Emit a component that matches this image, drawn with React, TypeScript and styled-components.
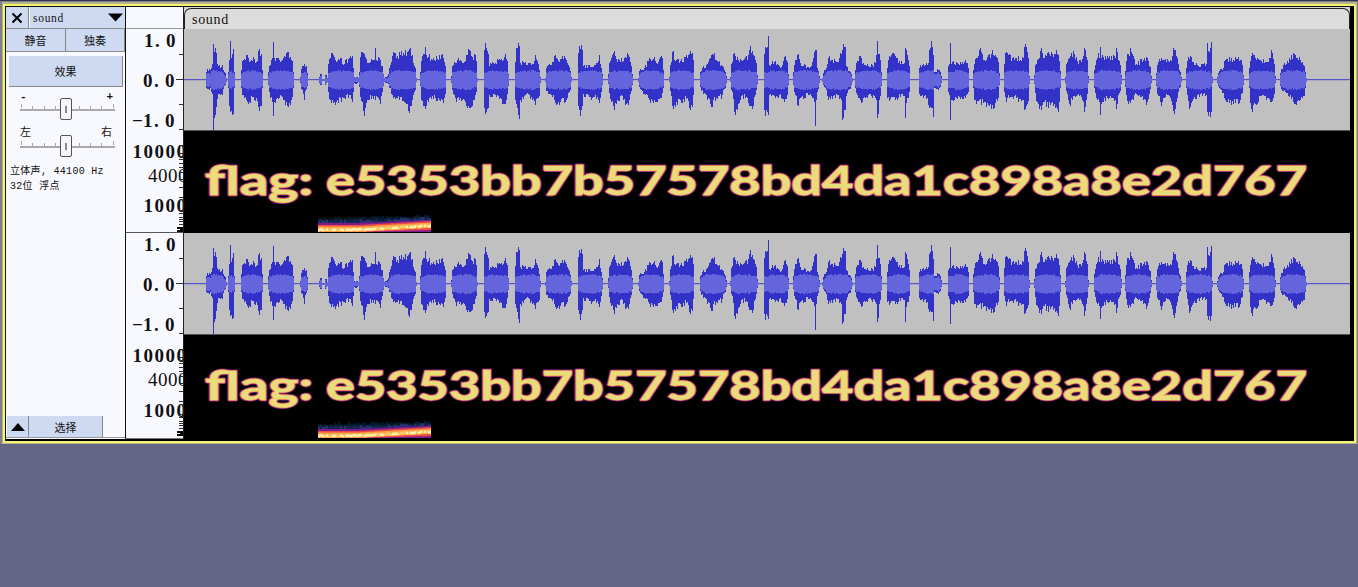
import React from 'react';
import styled, { createGlobalStyle } from 'styled-components';

const GlobalStyle = createGlobalStyle`
  * { box-sizing: border-box; }
  body { margin: 0; background: #636684; overflow: hidden; }
`;

const cjk = `"Liberation Mono", "Noto Sans CJK SC", monospace`;

const Page = styled.div`
  width: 1358px;
  height: 587px;
  background: #636684;
  border-top: 1px solid #33334f;
`;

const Frame = styled.div`
  height: 443px;
  padding: 1px 1px 0 2px;
  background: #7f7f8c;
`;

const Focus = styled.div`
  height: 442px;
  border: 1px solid #b5b38e;
  border-width: 2px 1px 1px 1px;
  background: #f6f370;
  padding: 2px 2px 2px 2px;
`;

const Track = styled.div`
  height: 435px;
  display: flex;
  background: #000;
  border: 1px solid #111;
  border-width: 1px 0 0 1px;
  overflow: hidden;
`;

const Panel = styled.div`
  width: 120px;
  height: 432px;
  flex: none;
  display: flex;
  flex-direction: column;
  background: #f8f9ff;
  border-right: 1px solid #111;
  font-family: ${cjk};
`;

const Row = styled.div<{ h: number }>`
  display: flex;
  height: ${(p) => p.h}px;
  border-bottom: 1px solid #8c8c8c;
`;

const Button = styled.button<{ w: number }>`
  width: ${(p) => p.w}px;
  height: 100%;
  padding: 0;
  border: 0;
  border-right: 1px solid #888;
  background: #cddaf1;
  display: flex;
  align-items: center;
  justify-content: center;
  color: #111;
  font: 11px ${cjk};
`;

const Title = styled.div`
  flex: 1;
  margin-left: 1px;
  padding: 0 2px 0 3px;
  background: #cddaf1;
  display: flex;
  align-items: center;
  justify-content: space-between;
  font-family: "Liberation Serif", serif;
  font-size: 11.5px;
  letter-spacing: 0.7px;
  color: #111;
`;

const Effects = styled(Button)`
  height: 31px;
  margin: 4px 0 0 3px;
  border-bottom: 1px solid #888;
  flex: none;
`;

const SliderBox = styled.div<{ top: number }>`
  width: 96px;
  height: 31px;
  margin: ${(p) => p.top}px 0 0 14px;
  flex: none;
`;

const SliderLabels = styled.div<{ inset: number; strong?: boolean }>`
  display: flex;
  justify-content: space-between;
  height: 9px;
  padding-right: ${(p) => p.inset}px;
  line-height: ${(p) => (p.strong ? 11 : 9)}px;
  font-size: 11px;
  font-weight: ${(p) => (p.strong ? 700 : 400)};
  color: #111;
`;

const Info = styled.div`
  margin: 4px 0 0 4px;
  font-size: 10px;
  letter-spacing: 0.3px;
  line-height: 15px;
  white-space: pre;
  color: #111;
`;

const Footer = styled.div`
  display: flex;
  height: 22px;
  margin: auto 0 1px;
  padding-left: 1px;
  border-bottom: 1px solid #999;
`;

const Rulers = styled.div`
  width: 58px;
  height: 432px;
  flex: none;
  background: #f8f9ff;
  border-right: 1px solid #222;
`;

const Clip = styled.div`
  width: 1166px;
  flex: none;
`;

const ClipTop = styled.div`
  height: 22px;
  padding-top: 1px;
  background: #d2d4da;
`;

const ClipHeader = styled.div`
  height: 21px;
  border: 1px solid #222;
  border-bottom: 0;
  border-radius: 7px 7px 0 0;
  background: #dcdcdc;
  padding: 2px 0 0 7px;
  font: 14px/18px "Liberation Serif", serif;
  letter-spacing: 0.7px;
  color: #111;
`;

const Channel = styled.div`
  height: 204px;
`;

const Svg = styled.svg`
  display: block;
`;

const SliderSvg = styled(Svg)`
  overflow: visible;
`;

type Point = [number, number, number];

// Envelope of each burst: x, amplitude above, amplitude below the centre line.
const bursts: Point[][] = [
  [[206,8,8],[210,10,8],[212,16,14],[213,36,50],[214,28,38],[216,27,27],[218,14,14],[220,12,15],[222,15,15],[224,8,6],[226,2,2]],
  [[228,8,8],[229,20,26],[230,39,32],[231,22,31],[233,31,34],[234,8,8]],
  [[241,10,8],[243,20,15],[246,25,20],[249,18,22],[252,19,17],[256,18,18],[258,29,27],[261,26,26],[262,10,8]],
  [[268,8,5],[270,15,18],[272,22,22],[273,38,36],[274,22,22],[280,18,15],[284,24,20],[288,28,27],[291,20,20],[293,8,8]],
  [[300,3,3],[302,14,10],[304,16,20],[306,14,9],[307,7,6]],
  [[319,3,3],[321,6,5],[322,1,1],[324,1,1],[325,5,5],[326,5,3],[327,2,2]],
  [[328,16,12],[333,25,23],[337,19,20],[340,22,18],[344,16,18],[349,22,15],[352,24,22],[353,12,12],[354,3,3]],
  [[355,2,4],[357,3,3],[358,2,2]],
  [[359,8,7],[362,28,22],[364,26,36],[367,17,20],[372,20,16],[374,20,16],[375,32,20],[376,20,16],[380,20,24],[382,14,12],[383,6,6]],
  [[384,2,2],[387,4,3],[389,12,8],[392,24,15],[396,22,18],[400,25,17],[404,25,22],[409,31,33],[412,25,20],[414,14,12],[416,2,2]],
  [[420,8,6],[423,26,26],[425,33,29],[427,22,20],[432,20,16],[438,20,18],[442,26,20],[444,18,18],[445,14,14]],
  [[451,4,3],[452,14,10],[455,17,18],[460,20,18],[464,18,20],[468,31,26],[470,29,28],[473,20,20],[475,25,15],[477,2,2]],
  [[484,30,28],[486,32,32],[488,26,28],[489,14,15],[494,16,14],[500,20,18],[504,23,24],[506,21,20],[508,6,6]],
  [[515,18,20],[517,32,28],[518,37,35],[519,34,39],[520,17,20],[526,15,14],[532,16,20],[535,25,25],[538,16,18],[540,3,3]],
  [[545,2,2],[546,12,11],[550,15,14],[553,18,15],[554,24,20],[558,19,22],[562,24,18],[566,20,20],[569,13,12],[571,3,2]],
  [[578,27,26],[580,31,36],[582,30,26],[583,14,14],[590,13,17],[595,15,15],[599,25,23],[601,12,12],[602,6,5]],
  [[608,6,4],[611,22,22],[614,29,30],[617,18,20],[622,18,16],[626,22,24],[628,25,25],[630,18,14],[632,6,5]],
  [[638,2,2],[639,9,7],[644,12,14],[648,19,18],[655,19,22],[658,18,19],[661,24,18],[663,10,8]],
  [[669,3,2],[671,18,16],[672,28,26],[676,20,22],[680,19,20],[687,22,18],[690,29,30],[693,20,15]],
  [[700,8,7],[704,12,13],[708,18,18],[711,25,27],[713,25,20],[718,18,16],[722,14,15],[724,10,9],[726,4,3]],
  [[730,3,2],[731,16,10],[734,27,32],[738,20,24],[742,19,15],[747,20,18],[749,30,26],[753,25,26],[755,20,15],[757,5,4]],
  [[764,26,30],[766,32,30],[767,33,32],[768,44,35],[769,15,15],[774,18,16],[780,12,14],[784,23,22],[787,18,15],[788,6,5]],
  [[793,8,5],[796,20,16],[797,25,25],[802,14,16],[810,13,14],[813,22,18],[814,28,22],[815,30,46],[816,30,20],[817,12,12],[819,4,3]],
  [[822,2,2],[825,10,8],[828,22,20],[833,17,16],[838,18,15],[841,26,20],[842,30,40],[844,33,30],[845,33,30],[846,14,16],[848,9,10],[852,2,2]],
  [[855,10,8],[858,19,18],[860,24,20],[864,15,17],[870,13,14],[875,17,18],[876,25,20],[877,39,38],[878,26,34],[880,20,16],[881,8,6]],
  [[887,12,18],[890,23,19],[896,22,18],[902,16,14],[904,17,16],[905,32,38],[907,25,18],[909,14,12]],
  [[919,12,14],[924,14,16],[927,15,18],[929,30,28],[931,39,28],[932,33,28],[933,25,37],[934,8,8],[938,10,10],[941,4,3]],
  [[948,14,12],[949,16,15],[950,37,40],[951,16,20],[958,16,16],[964,18,16],[968,12,12]],
  [[973,10,8],[976,22,24],[978,24,21],[979,30,20],[984,20,22],[990,22,24],[992,30,25],[994,24,28],[998,18,18],[999,7,5]],
  [[1004,16,12],[1006,28,22],[1008,25,15],[1014,20,16],[1020,20,19],[1023,22,20],[1024,33,30],[1027,28,24],[1029,4,4]],
  [[1034,5,4],[1037,20,22],[1040,29,26],[1044,22,22],[1050,24,25],[1054,26,24],[1058,25,32],[1060,9,8]],
  [[1065,3,3],[1067,18,14],[1069,22,24],[1074,26,16],[1078,16,14],[1083,24,22],[1084,32,32],[1086,23,20],[1088,4,3]],
  [[1094,10,8],[1097,22,20],[1099,22,22],[1100,33,35],[1101,22,24],[1104,20,18],[1110,20,16],[1115,22,20],[1116,32,29],[1119,19,13],[1121,5,4]],
  [[1125,9,7],[1128,26,24],[1131,28,20],[1136,16,14],[1142,18,16],[1147,22,22],[1149,14,14],[1151,4,3]],
  [[1156,7,6],[1158,18,16],[1161,22,26],[1166,18,14],[1170,20,18],[1174,30,34],[1177,22,18],[1179,10,8],[1181,3,2]],
  [[1186,12,8],[1190,24,27],[1194,15,17],[1200,13,14],[1206,16,15],[1207,37,32],[1209,28,32],[1211,38,32],[1212,3,3]],
  [[1217,3,3],[1219,9,8],[1223,12,13],[1224,19,18],[1230,19,20],[1240,20,20],[1242,15,13],[1243,5,5]],
  [[1249,12,8],[1252,27,32],[1255,22,24],[1262,17,15],[1268,18,18],[1271,30,22],[1274,16,14],[1275,4,3]],
  [[1280,7,6],[1286,16,13],[1290,20,15],[1295,25,24],[1300,20,20],[1304,14,16],[1305,8,8],[1306,2,2]],
];

const noise = (n: number) => {
  const v = Math.sin(n * 127.1 + 11.7) * 43758.5453;
  return v - Math.floor(v);
};

// Keeps peaks narrow inside a burst, and its two ends steep.
const blend = (a: number, b: number, t: number, end: boolean) => {
  const k = end ? 0.6 : 1.9;
  return b > a ? a + (b - a) * Math.pow(t, k) : b + (a - b) * Math.pow(1 - t, k);
};

function buildWave() {
  let outer = '';
  let inner = '';
  for (const pts of bursts) {
    const first = pts[0][0];
    const last = pts[pts.length - 1][0];
    for (let x = first; x <= last; x++) {
      const i = Math.max(1, pts.findIndex((p) => p[0] >= x));
      const a = pts[i - 1];
      const b = pts[i];
      const t = (x - a[0]) / (b[0] - a[0]);
      const end = i === 1 || i === pts.length - 1;
      const exact = pts.some((p) => p[0] === x);
      let up = blend(a[1], b[1], t, end);
      let down = blend(a[2], b[2], t, end);
      if (!exact) {
        up *= 0.9 + noise(x) * 0.34;
        down *= 0.9 + noise(x + 900) * 0.34;
      }
      up = Math.round(up);
      down = Math.round(down);
      const px = x - 184;
      outer += `M${px} ${51 - up}h1v${up + down}h-1z`;
      const edge = Math.min(x - first, last - x);
      const core = Math.round(Math.min(up * 0.75, down * 0.75, 6.3 + Math.min(edge, 7) * 0.3 + noise(x + 40) * 1.6));
      inner += `M${px} ${51 - core}h1v${core * 2}h-1z`;
    }
  }
  return { outer, inner };
}

const wave = buildWave();

const Waveform = () => (
  <Svg width={1166} height={102} shapeRendering="crispEdges">
    <rect width={1166} height={101} fill="#c0c0c0" />
    <rect y={101} width={1166} height={1} fill="#555" />
    <rect y={50} width={1166} height={1} fill="#5555c8" />
    <rect y={51} width={1166} height={1} fill="#a9a9c4" />
    <path d={wave.outer} fill="#3232c8" />
    <path d={wave.inner} fill="#6464dc" />
  </Svg>
);

const Glyphs = ({ text, x, y, width }: { text: string; x: number; y: number; width: number }) => {
  const common = {
    x,
    y,
    textLength: width,
    lengthAdjust: 'spacingAndGlyphs' as const,
    fontFamily: 'Lato, "Open Sans", sans-serif',
    fontWeight: 700,
    fontSize: 40,
    strokeLinejoin: 'round' as const,
  };
  return (
    <g>
      <text {...common} aria-hidden fill="none" stroke="#8a1f96" strokeWidth={2.8} filter="url(#soft)">{text}</text>
      <text {...common} fill="#e8dc7c" stroke="#fb9a40" strokeWidth={1.3} paintOrder="stroke" filter="url(#softer)">{text}</text>
    </g>
  );
};

const Sweep = ({ dy }: { dy: number }) => {
  const cells: React.ReactNode[] = [];
  for (let i = 0; i < 113; i += 2) {
    const rise = i > 40 ? ((i - 40) / 73) * 4 : 0;
    const x = 134 + i;
    const w = Math.min(2, 113 - i);
    const j = noise(i + 300) * 2;
    cells.push(
      <g key={i}>
        <rect x={x} y={85 - rise * 0.4 + noise(i) * 3} width={w} height={7} fill="#061a2c" />
        <rect x={x} y={88 - rise * 0.6 + j} width={w} height={5} fill={noise(i + 7) > 0.5 ? '#29306e' : '#12284e'} />
        <rect x={x} y={92 - rise * 0.8} width={w} height={9 + rise * 0.8} fill="#7c1e90" />
        <rect x={x} y={94 - rise} width={w} height={7 + rise * 0.5} fill="#ee4c44" />
        <rect x={x} y={95.5 - rise} width={w} height={5.3} fill="#ffa445" />
        <rect x={x} y={96.8 - rise + j * 0.5} width={w} height={2.8} fill={noise(i + 55) > 0.35 ? '#fbf0a8' : '#ffc76a'} />
      </g>,
    );
  }
  return <g transform={`translate(0 ${dy})`} filter="url(#softer)">{cells}</g>;
};

const Spectrogram = ({ height = 102, textY = 63.5, sweepDy = 0 }: { height?: number; textY?: number; sweepDy?: number }) => (
  <Svg width={1166} height={height}>
    <defs>
      <filter id="soft" x="-2%" y="-20%" width="104%" height="140%"><feGaussianBlur stdDeviation="0.7" /></filter>
      <filter id="softer" x="-2%" y="-20%" width="104%" height="140%"><feGaussianBlur stdDeviation="0.45" /></filter>
    </defs>
    <rect width={1166} height={height} fill="#000" />
    <Glyphs text="flag:" x={21} y={textY} width={108} />
    <Glyphs text="e5353bb7b57578bd4da1c898a8e2d767" x={142} y={textY} width={981} />
    <Sweep dy={sweepDy} />
  </Svg>
);

const Label = ({ text, x, y, bold = true }: { text: string; x: number; y: number; bold?: boolean }) => (
  <text
    x={text.split('').map((_, i) => x + i * (bold ? 11 : 10)).join(' ')}
    y={y}
    fontFamily='"Liberation Serif", serif'
    fontSize={19}
    fontWeight={bold ? 700 : 400}
    fill="#111"
  >
    {text}
  </text>
);

const logTicks = [139, 147, 150, 153, 157, 161, 166, 173, 181, 191, 204, 207, 211, 213, 215, 218];

const RulerScale = ({ dy, shift }: { dy: number; shift: number }) => (
  <g transform={`translate(0 ${dy})`}>
    <Label text="1.0" x={18} y={39.5} />
    <Label text="0.0" x={17} y={79.5} />
    <Label text="−1.0" x={6} y={119.5} />
    <Label text="10000" x={6.5} y={151} />
    <Label text="4000" x={22} y={175} bold={false} />
    <Label text="1000" x={17.5} y={204.5 + shift} />
    <g fill="#333" shapeRendering="crispEdges">
      {[47, 97, 122].map((y) => <rect key={y} x={53} y={y} width={4} height={1} />)}
      <rect x={50} y={72} width={7} height={1} />
      {logTicks.map((y) => <rect key={y} x={53} y={y - 1} width={4} height={1} />)}
      <path d="M51 220h6v5h-6v-2h3v-1h-3z" fill="#000" />
    </g>
  </g>
);

const Slider = ({ top, left, right, inset, strong }: { top: number; left: string; right: string; inset: number; strong?: boolean }) => (
  <SliderBox top={top}>
    <SliderLabels inset={inset} strong={strong}><span>{left}</span><span>{right}</span></SliderLabels>
    <SliderSvg width={96} height={21}>
      <g fill="#aaa" shapeRendering="crispEdges">
        <rect y={8} width={95} height={2} />
        {[1, 12, 24, 35, 59, 70, 81, 93].map((x, i) => (
          <rect key={x} x={x} y={i === 0 || i === 7 ? 3 : 5} width={1} height={4} />
        ))}
      </g>
      <rect x={40.5} y={-2.5} width={11} height={21} rx={1.5} fill="#f7f7fa" stroke="#555" />
      <rect x={45} y={5} width={2} height={7} fill="#888" />
    </SliderSvg>
  </SliderBox>
);

export default function App() {
  return (
    <>
      <GlobalStyle />
      <Page>
        <Frame>
          <Focus>
            <Track>
              <Panel>
                <Row h={22}>
                  <Button w={23} aria-label="close">
                    <svg width="12" height="12"><path d="M1.500 1.500l9 9M10.500 1.500l-9 9" stroke="#000" strokeWidth="2" /></svg>
                  </Button>
                  <Title>
                    sound
                    <svg width="15" height="9"><path d="M0 .5h15l-7.500 8z" fill="#000" /></svg>
                  </Title>
                </Row>
                <Row h={23}>
                  <Button w={60}>静音</Button>
                  <Button w={59}>独奏</Button>
                </Row>
                <Effects w={114}>效果</Effects>
                <Slider top={5} left="-" right="+" inset={3} strong />
                <Slider top={6} left="左" right="右" inset={4} />
                <Info>{'立体声, 44100 Hz\n32位 浮点'}</Info>
                <Footer>
                  <Button w={22} aria-label="collapse">
                    <svg width="14" height="8"><path d="M0 8L7 0l7 8z" fill="#000" /></svg>
                  </Button>
                  <Button w={74}>选择</Button>
                </Footer>
              </Panel>
              <Rulers>
                <Svg width={57} height={432}>
                  <rect y={21} width={57} height={1} fill="#999" />
                  <RulerScale dy={0} shift={0} />
                  <rect y={225} width={57} height={1} fill="#555" />
                  <RulerScale dy={204} shift={1.5} />
                  <rect y={431} width={57} height={1} fill="#777" />
                </Svg>
              </Rulers>
              <Clip>
                <ClipTop><ClipHeader>sound</ClipHeader></ClipTop>
                <Channel><Waveform /><Spectrogram /></Channel>
                <Channel><Waveform /><Spectrogram height={104} textY={64.5} sweepDy={2} /></Channel>
              </Clip>
            </Track>
          </Focus>
        </Frame>
      </Page>
    </>
  );
}
